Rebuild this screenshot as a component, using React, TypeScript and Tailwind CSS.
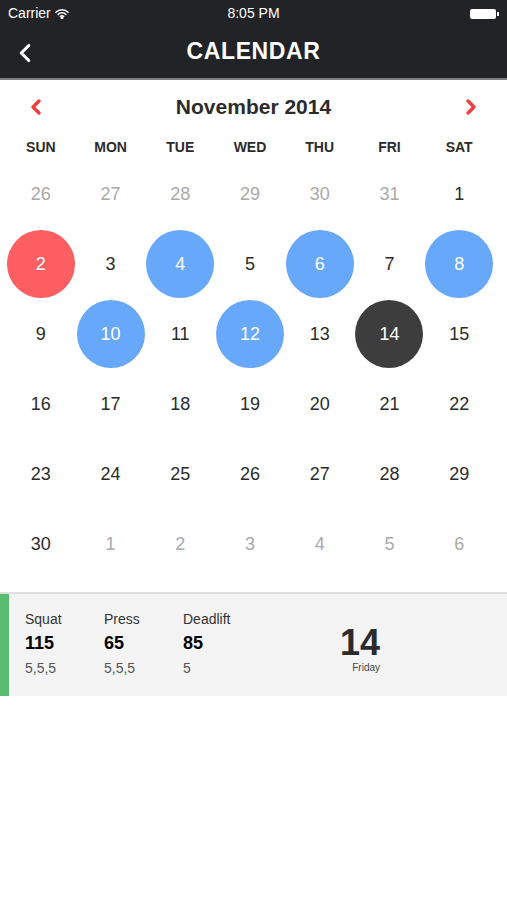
import { ChevronLeft, ChevronRight } from "lucide-react";

type Day = { n: number; muted?: boolean; tone?: "red" | "blue" | "dark" };

const weeks: Day[][] = [
  [{ n: 26, muted: true }, { n: 27, muted: true }, { n: 28, muted: true }, { n: 29, muted: true }, { n: 30, muted: true }, { n: 31, muted: true }, { n: 1 }],
  [{ n: 2, tone: "red" }, { n: 3 }, { n: 4, tone: "blue" }, { n: 5 }, { n: 6, tone: "blue" }, { n: 7 }, { n: 8, tone: "blue" }],
  [{ n: 9 }, { n: 10, tone: "blue" }, { n: 11 }, { n: 12, tone: "blue" }, { n: 13 }, { n: 14, tone: "dark" }, { n: 15 }],
  [{ n: 16 }, { n: 17 }, { n: 18 }, { n: 19 }, { n: 20 }, { n: 21 }, { n: 22 }],
  [{ n: 23 }, { n: 24 }, { n: 25 }, { n: 26 }, { n: 27 }, { n: 28 }, { n: 29 }],
  [{ n: 30 }, { n: 1, muted: true }, { n: 2, muted: true }, { n: 3, muted: true }, { n: 4, muted: true }, { n: 5, muted: true }, { n: 6, muted: true }],
];

const labels = ["SUN", "MON", "TUE", "WED", "THU", "FRI", "SAT"];

const lifts = [
  { name: "Squat", weight: "115", reps: "5,5,5" },
  { name: "Press", weight: "65", reps: "5,5,5" },
  { name: "Deadlift", weight: "85", reps: "5" },
];

function DayCell({ day }: { day: Day }) {
  const circle =
    day.tone === "red"
      ? "bg-[#fc5e62] text-white"
      : day.tone === "blue"
        ? "bg-[#67a8fa] text-white"
        : day.tone === "dark"
          ? "bg-[#3d3d3d] text-white"
          : day.muted
            ? "text-[#a9a9a9]"
            : "text-[#2b2b2b]";
  return (
    <div className="flex h-[70px] items-center justify-center">
      <div className={`flex h-[68px] w-[68px] items-center justify-center rounded-full text-[18px] ${circle}`}>
        {day.n}
      </div>
    </div>
  );
}

export default function App() {
  return (
    <div className="min-h-screen bg-white font-['Liberation_Sans',Arial,sans-serif]">
      {/* status bar + nav */}
      <div className="bg-[#222327] text-white">
        <div className="relative flex h-[27px] items-center px-2 text-[14px]">
          <span className="flex items-center gap-1">
            Carrier
            <svg width="14" height="11" viewBox="0 0 14 11" fill="none" stroke="white" strokeWidth="1.6" strokeLinecap="round">
              <path d="M1 4.2a8.5 8.5 0 0 1 12 0" />
              <path d="M3.2 6.4a5.3 5.3 0 0 1 7.6 0" />
              <path d="M5.4 8.5a2.2 2.2 0 0 1 3.2 0" />
              <circle cx="7" cy="10" r="0.6" fill="white" />
            </svg>
          </span>
          <span className="absolute left-1/2 -translate-x-1/2">8:05 PM</span>
          <span className="ml-auto flex items-center">
            <span className="h-[10px] w-[26px] rounded-[2px] bg-white" />
            <span className="ml-[1px] h-[4px] w-[2px] bg-white" />
          </span>
        </div>
        <div className="relative flex h-[51px] items-center justify-center">
          <ChevronLeft className="absolute left-[10px] h-[30px] w-[30px]" strokeWidth={2.5} />
          <span className="-mt-[2px] text-[23px] font-bold tracking-[0.6px]">CALENDAR</span>
        </div>
      </div>
      <div className="h-[2px] bg-[#7d7e80]" />

      {/* month header */}
      <div className="flex h-[52px] items-center justify-between px-[24px] pt-[1px]">
        <ChevronLeft className="h-[24px] w-[24px] text-[#f2403f]" strokeWidth={3.5} />
        <span className="text-[21px] font-bold text-[#2b2b2b]">November 2014</span>
        <ChevronRight className="h-[24px] w-[24px] text-[#f2403f]" strokeWidth={3.5} />
      </div>

      {/* calendar grid */}
      <div className="ml-[6px] w-[488px]">
        <div className="grid grid-cols-7 pb-[1px] pt-[5px]">
          {labels.map((l) => (
            <div key={l} className="text-center text-[14px] font-bold text-[#2b2b2b]">
              {l}
            </div>
          ))}
        </div>
        {weeks.map((w, i) => (
          <div key={i} className="grid grid-cols-7">
            {w.map((d, j) => (
              <DayCell key={j} day={d} />
            ))}
          </div>
        ))}
      </div>

      {/* workout summary */}
      <div className="mt-[13px] flex h-[104px] border-t-2 border-[#dedede] bg-[#f4f4f4]">
        <div className="w-[9px] bg-[#58bd70]" />
        <div className="flex flex-1 items-start pl-[16px] pt-[15px]">
          {lifts.map((l) => (
            <div key={l.name} className="w-[79px] text-[#2b2b2b]">
              <div className="text-[14px] leading-[20px] text-[#333]">{l.name}</div>
              <div className="mt-[3px] text-[18px] font-bold leading-[22px] text-black">{l.weight}</div>
              <div className="mt-[4px] text-[14px] leading-[20px] text-[#555]">{l.reps}</div>
            </div>
          ))}
          <div className="ml-[78px] flex flex-col items-end pt-[16px]">
            <span className="text-[36px] font-bold leading-[36px] text-[#2b2b2b]">14</span>
            <span className="text-[10px] leading-[14px] text-[#444]">Friday</span>
          </div>
        </div>
      </div>
    </div>
  );
}
